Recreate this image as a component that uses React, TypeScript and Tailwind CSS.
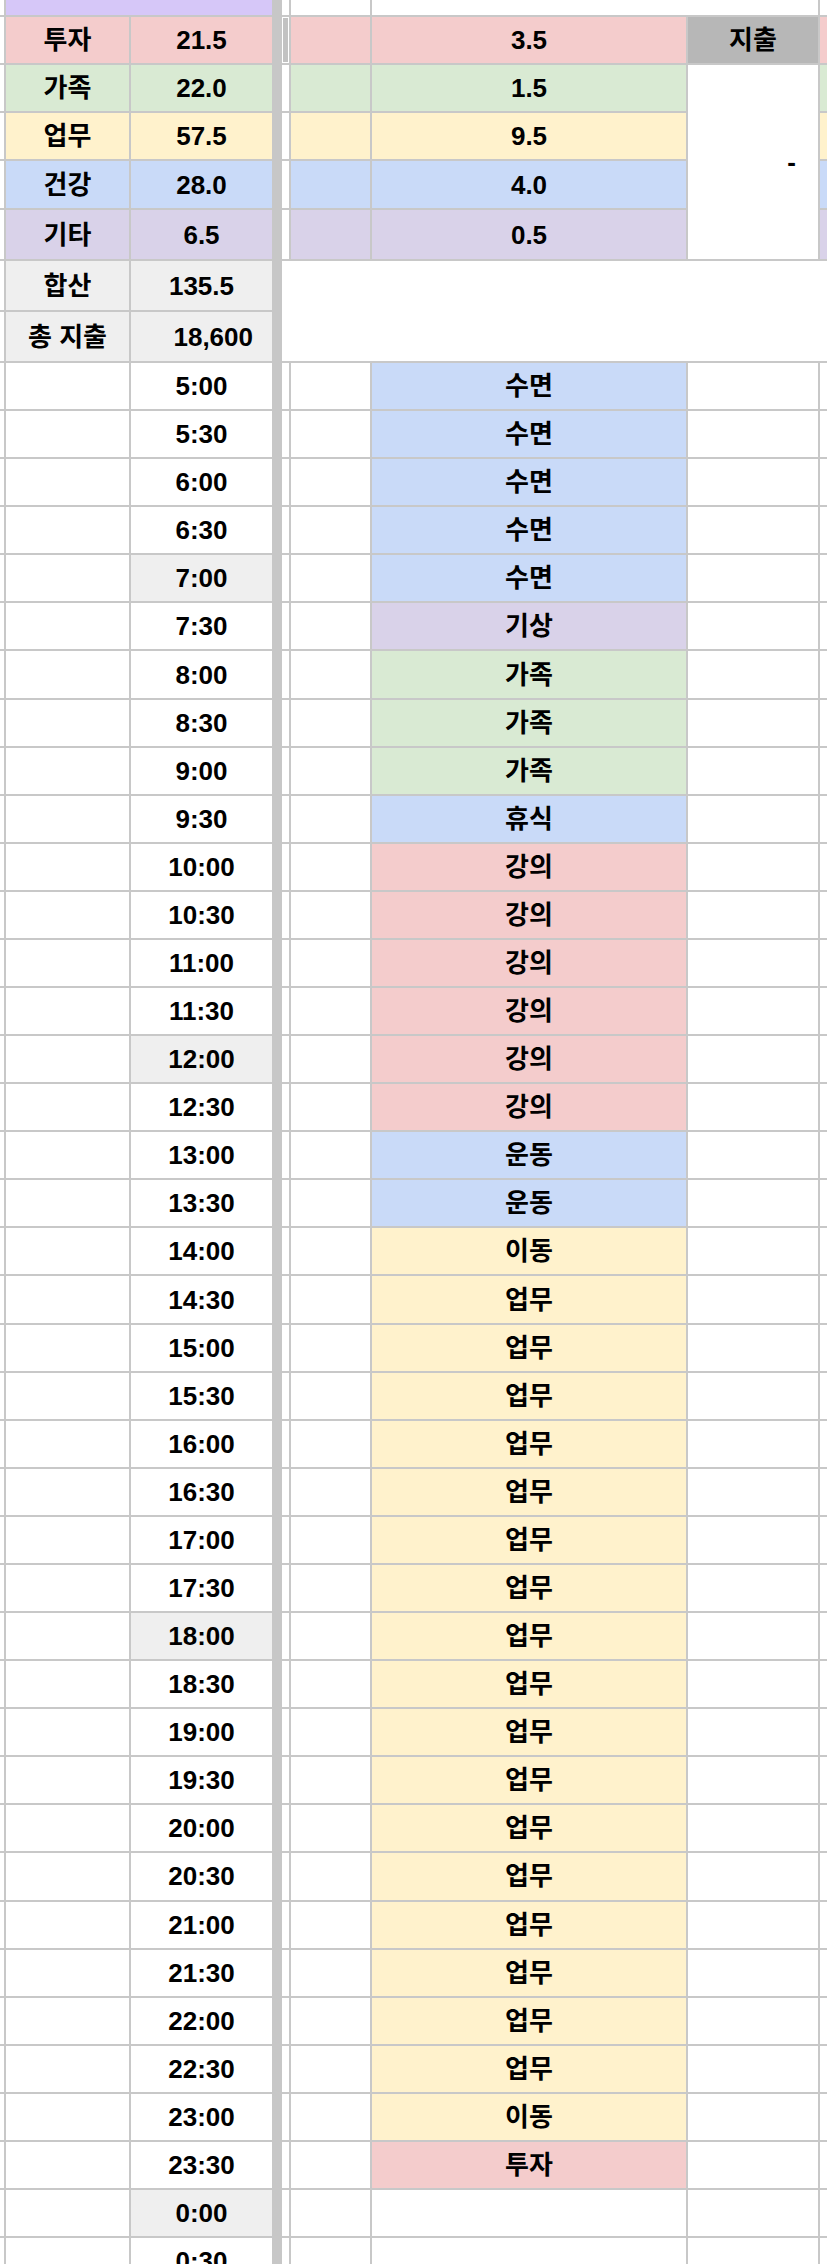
import React from 'react';

const FONT = { fontFamily: "'Liberation Sans', 'Noto Sans CJK KR', sans-serif" };

const actColor: Record<string, string> = {
  수면: 'bg-[#c9daf8]',
  기상: 'bg-[#d9d2e9]',
  가족: 'bg-[#d9ead3]',
  휴식: 'bg-[#c9daf8]',
  강의: 'bg-[#f4cccc]',
  운동: 'bg-[#c9daf8]',
  이동: 'bg-[#fff2cc]',
  업무: 'bg-[#fff2cc]',
  투자: 'bg-[#f4cccc]',
};

const acts: string[] = [
  '수면', '수면', '수면', '수면', '수면', '기상', '가족', '가족', '가족', '휴식',
  '강의', '강의', '강의', '강의', '강의', '강의', '운동', '운동', '이동',
  '업무', '업무', '업무', '업무', '업무', '업무', '업무', '업무', '업무', '업무', '업무', '업무', '업무', '업무', '업무', '업무', '업무',
  '이동', '투자', '', '',
];

const times: string[] = [];
for (let h = 5; h <= 23; h++) {
  times.push(`${h}:00`);
  times.push(`${h}:30`);
}
times.push('0:00');
times.push('0:30');

const grayTimes = new Set(['7:00', '12:00', '18:00', '0:00']);

const cats = [
  { label: '투자', v: '21.5', r: '3.5', bg: 'bg-[#f4cccc]', h: 'h-[48px]' },
  { label: '가족', v: '22.0', r: '1.5', bg: 'bg-[#d9ead3]', h: 'h-[48px]' },
  { label: '업무', v: '57.5', r: '9.5', bg: 'bg-[#fff2cc]', h: 'h-[48px]' },
  { label: '건강', v: '28.0', r: '4.0', bg: 'bg-[#c9daf8]', h: 'h-[49px]' },
  { label: '기타', v: '6.5', r: '0.5', bg: 'bg-[#d9d2e9]', h: 'h-[51px]' },
];

export default function App() {
  return (
    <div
      className="w-[827px] h-[2264px] overflow-hidden bg-white flex text-[26px] font-bold text-black leading-none"
      style={FONT}
    >
      {/* Left frozen pane */}
      <div className="w-[272px] shrink-0 flex flex-col">
        <div className="flex h-[17px] shrink-0 border-b-2 border-[#c8c8c8]">
          <div className="w-[6px] border-r-2 border-[#c8c8c8]" />
          <div className="flex-1 bg-[#d6c7f8]" />
        </div>
        {cats.map((c) => (
          <div key={c.label} className={`flex ${c.h} shrink-0 border-b-2 border-[#c8c8c8]`}>
            <div className="w-[6px] border-r-2 border-[#c8c8c8]" />
            <div className={`w-[125px] border-r-2 border-[#c8c8c8] ${c.bg} flex items-center justify-center`}>
              {c.label}
            </div>
            <div className={`flex-1 ${c.bg} flex items-center justify-center`}>{c.v}</div>
          </div>
        ))}
        <div className="flex h-[51px] shrink-0 border-b-2 border-[#c8c8c8]">
          <div className="w-[6px] border-r-2 border-[#c8c8c8]" />
          <div className="w-[125px] border-r-2 border-[#c8c8c8] bg-[#efefef] flex items-center justify-center">
            합산
          </div>
          <div className="flex-1 bg-[#efefef] flex items-center justify-center">135.5</div>
        </div>
        <div className="flex h-[51px] shrink-0 border-b-2 border-[#c8c8c8]">
          <div className="w-[6px] border-r-2 border-[#c8c8c8]" />
          <div className="w-[125px] border-r-2 border-[#c8c8c8] bg-[#efefef] flex items-center justify-center">
            총 지출
          </div>
          <div className="flex-1 bg-[#efefef] flex items-center justify-end pr-[19px]">18,600</div>
        </div>
        {times.map((t) => (
          <div key={t} className="flex h-[48.09px] shrink-0 border-b-2 border-[#c8c8c8]">
            <div className="w-[6px] border-r-2 border-[#c8c8c8]" />
            <div className="w-[125px] border-r-2 border-[#c8c8c8]" />
            <div
              className={`flex-1 flex items-center justify-center ${grayTimes.has(t) ? 'bg-[#efefef]' : 'bg-white'}`}
            >
              {t}
            </div>
          </div>
        ))}
      </div>

      {/* Frozen divider */}
      <div className="w-[10px] shrink-0 bg-[#c7c7c7]" />

      {/* Right scrolling pane */}
      <div className="flex-1 min-w-0 flex flex-col">
        <div className="flex h-[17px] shrink-0 border-b-2 border-[#c8c8c8]">
          <div className="w-[9px] shrink-0 border-r-2 border-[#c8c8c8]" />
          <div className="w-[81px] shrink-0 border-r-2 border-[#c8c8c8]" />
          <div className="w-[316px] shrink-0" />
          <div className="w-[132px] shrink-0 border-r-2 border-[#c8c8c8]" />
          <div className="flex-1" />
        </div>

        <div className="grid shrink-0 grid-cols-[9px_81px_316px_132px_1fr] grid-rows-[48px_48px_48px_49px_51px]">
          {cats.map((c, i) => (
            <React.Fragment key={c.label}>
              <div className="border-r-2 border-b-2 border-[#c8c8c8] bg-white p-[1px]">
                {i === 0 && <div className="w-full h-full bg-[#c2c2c2]" />}
              </div>
              <div className={`border-r-2 border-b-2 border-[#c8c8c8] ${c.bg}`} />
              <div className={`border-r-2 border-b-2 border-[#c8c8c8] ${c.bg} flex items-center justify-center`}>
                {c.r}
              </div>
              {i === 0 && (
                <div className="border-r-2 border-b-2 border-[#c8c8c8] bg-[#b7b7b7] flex items-center justify-center">
                  지출
                </div>
              )}
              {i === 1 && (
                <div className="row-span-4 border-r-2 border-b-2 border-[#c8c8c8] bg-white flex items-center justify-end pr-[22px]">
                  -
                </div>
              )}
              <div className={`border-b-2 border-[#c8c8c8] ${c.bg}`} />
            </React.Fragment>
          ))}
        </div>

        <div className="h-[102px] shrink-0 border-b-2 border-[#c8c8c8] bg-white" />

        {times.map((t, i) => {
          const a = acts[i];
          const bg = a ? actColor[a] : 'bg-white';
          return (
            <div key={t} className="flex h-[48.09px] shrink-0 border-b-2 border-[#c8c8c8]">
              <div className="w-[9px] shrink-0 border-r-2 border-[#c8c8c8]" />
              <div className="w-[81px] shrink-0 border-r-2 border-[#c8c8c8]" />
              <div className={`w-[316px] shrink-0 border-r-2 border-[#c8c8c8] ${bg} flex items-center justify-center`}>
                {a}
              </div>
              <div className="w-[132px] shrink-0 border-r-2 border-[#c8c8c8]" />
              <div className="flex-1" />
            </div>
          );
        })}
      </div>
    </div>
  );
}
